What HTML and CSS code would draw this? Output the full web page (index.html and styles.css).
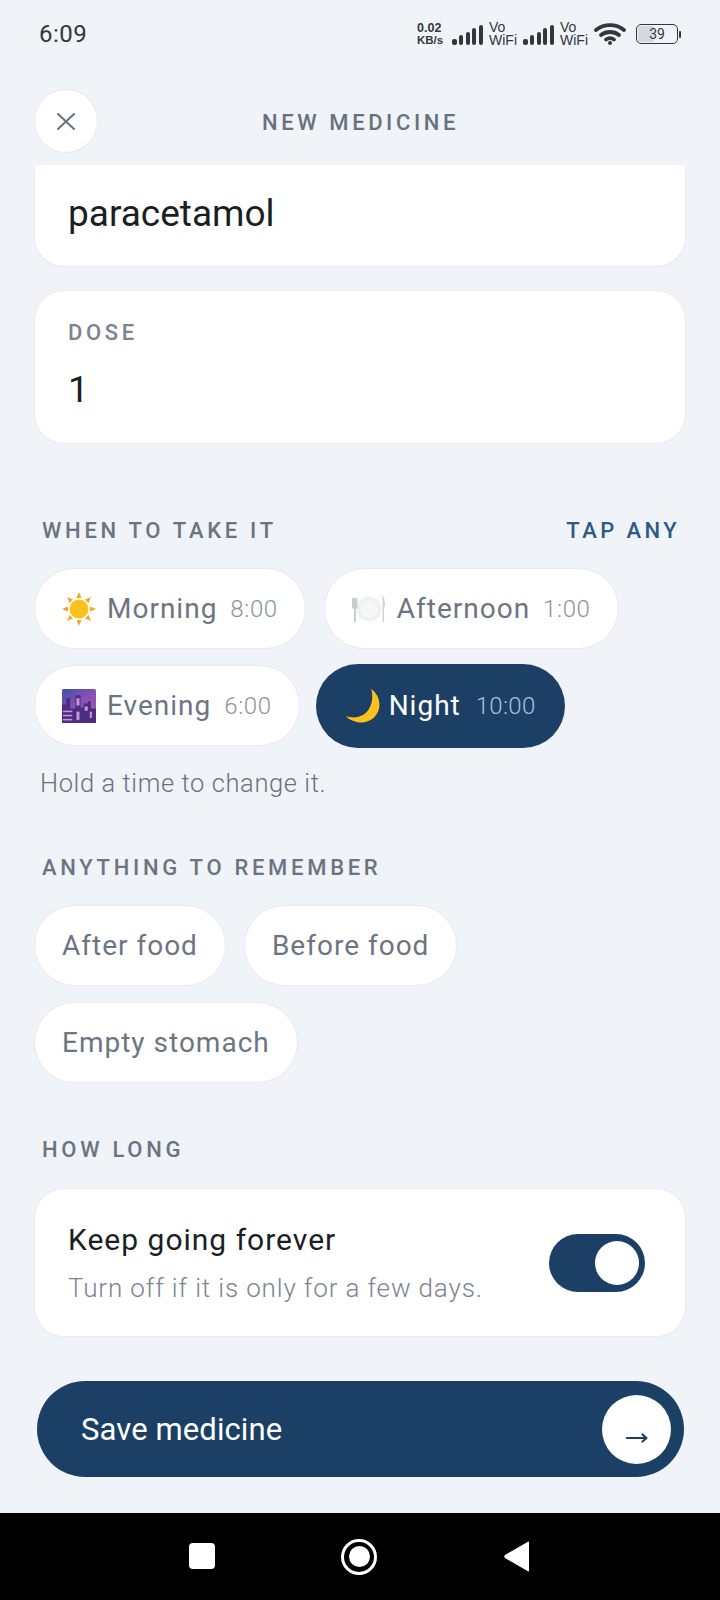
FILE: index.html
```html
<!DOCTYPE html>
<html lang="en">
<head>
<meta charset="utf-8">
<title>New medicine</title>
<link rel="stylesheet" href="styles.css">
</head>
<body>
<div class="phone">
  <div class="status">
    <span class="clock">6:09</span>
    <div class="tray">
      <span class="speed"><b>0.02</b><b>KB/s</b></span>
      <svg class="signal" viewBox="0 0 31 20"><rect x="0" y="14" width="5" height="6" rx="2"/><rect x="7" y="10" width="4" height="10" rx="2"/><rect x="14" y="7" width="4" height="13" rx="2"/><rect x="20" y="3" width="4" height="17" rx="2"/><rect x="27" y="0" width="4" height="20" rx="2"/></svg>
      <span class="vowifi">Vo<br>WiFi</span>
      <svg class="signal" viewBox="0 0 31 20"><rect x="0" y="14" width="5" height="6" rx="2"/><rect x="7" y="10" width="4" height="10" rx="2"/><rect x="14" y="7" width="4" height="13" rx="2"/><rect x="20" y="3" width="4" height="17" rx="2"/><rect x="27" y="0" width="4" height="20" rx="2"/></svg>
      <span class="vowifi">Vo<br>WiFi</span>
      <svg class="wifi" viewBox="0 0 32 22" fill="none" stroke="#33373d" stroke-width="3.800" stroke-linecap="round"><path d="M2 7C10 .5 22 .5 30 7"/><path d="M7 12C12 8 20 8 25 12"/><path d="M12 16.500C14.500 14.800 17.500 14.800 20 16.500"/><circle cx="16" cy="20" r="2" fill="#33373d" stroke="none"/></svg>
      <div class="battery"><div class="battery-body"><span class="battery-fill"></span><span class="battery-pct">39</span></div><span class="battery-nib"></span></div>
    </div>
  </div>

  <header class="topbar">
    <button class="close" aria-label="Close">
      <svg viewBox="0 0 20 17" fill="none" stroke="#68727f" stroke-width="2" stroke-linecap="round"><path d="M2 1l16 15M18 1L2 16"/></svg>
    </button>
    <h1 class="title">NEW MEDICINE</h1>
  </header>

  <main class="scroll">
    <div class="field field-clipped"><span class="field-value">paracetamol</span></div>
    <div class="field">
      <span class="field-label">DOSE</span>
      <span class="field-value">1</span>
    </div>

    <div class="section-head first">
      <span class="section-label">WHEN TO TAKE IT</span>
      <span class="section-action">TAP ANY</span>
    </div>
    <div class="chips">
      <div class="chip">
        <svg class="emoji" viewBox="0 0 34 34"><g fill="#f6a623"><path d="M17 0l2.500 6h-5z"/><path d="M17 34l-2.500-6h5z"/><path d="M0 17l6-2.500v5z"/><path d="M34 17l-6 2.500v-5z"/><path d="M5 5l6 2.500-3.500 3.500z"/><path d="M29 5l-2.500 6-3.500-3.500z"/><path d="M5 29l2.500-6 3.500 3.500z"/><path d="M29 29l-6-2.500 3.500-3.500z"/></g><circle cx="17" cy="17" r="9.500" fill="#fcc21b"/></svg>
        <span class="chip-name">Morning</span><span class="chip-time">8:00</span>
      </div>
      <div class="chip">
        <svg class="emoji" viewBox="0 0 34 34"><circle cx="17" cy="17" r="12.500" fill="#eff0f1"/><circle cx="17" cy="17" r="9" fill="#f7f7f8"/><path d="M0 6h5.500v9q0 2-1.500 2v13H2V17q-2 0-2-2z" fill="#c9cdd0"/><path d="M30.500 3q2.500 3 2.500 12h-1v15h-1.500z" fill="#cfd3d6"/></svg>
        <span class="chip-name">Afternoon</span><span class="chip-time">1:00</span>
      </div>
      <div class="chip">
        <svg class="emoji" viewBox="0 0 33 33"><defs><linearGradient id="dusk" x1="0" y1="0" x2=".7" y2="1"><stop offset="0" stop-color="#3a50ac"/><stop offset=".5" stop-color="#8a4fb4"/><stop offset="1" stop-color="#a85aa8"/></linearGradient></defs><rect width="33" height="33" rx="1.500" fill="url(#dusk)"/><path d="M0 15h4V9h4v10h5V6h5v12h3v-4h4v-2h3v7h5v14H0z" fill="#4d2d80"/><g fill="#c996d4"><rect x="1" y="21" width="9" height="1.500"/><rect x="1" y="25" width="9" height="1.500"/><rect x="1" y="29" width="9" height="1.500"/><rect x="14" y="9" width="3" height="7"/><rect x="22" y="17" width="3" height="4"/><rect x="27" y="22" width="2" height="6"/><rect x="14" y="22" width="3" height="8"/></g></svg>
        <span class="chip-name">Evening</span><span class="chip-time">6:00</span>
      </div>
      <div class="chip chip-on">
        <svg class="emoji" viewBox="0 0 33 33"><path d="M24.500 0C33 6 36 19 27 28c-8 7-20 5.500-27-1.500C8 29 17 27.500 22 20c3.500-6 4.500-13 2.500-20z" fill="#fcc21b"/></svg>
        <span class="chip-name">Night</span><span class="chip-time">10:00</span>
      </div>
    </div>
    <p class="hint">Hold a time to change it.</p>

    <div class="section-head remember">
      <span class="section-label">ANYTHING TO REMEMBER</span>
    </div>
    <div class="chips">
      <div class="chip chip-text"><span class="chip-name">After food</span></div>
      <div class="chip chip-text"><span class="chip-name">Before food</span></div>
      <div class="chip chip-text"><span class="chip-name">Empty stomach</span></div>
    </div>

    <div class="section-head">
      <span class="section-label">HOW LONG</span>
    </div>
    <div class="forever">
      <div class="forever-copy">
        <span class="forever-title">Keep going forever</span>
        <span class="forever-sub">Turn off if it is only for a few days.</span>
      </div>
      <div class="toggle"><span class="knob"></span></div>
    </div>

    <button class="save">
      <span>Save medicine</span>
      <span class="save-go">
        <svg class="save-arrow" viewBox="0 0 22 10" fill="none" stroke="#1c3f66" stroke-width="2.200" stroke-linecap="round" stroke-linejoin="round"><path d="M1 5h19M16.500 1.500L20.500 5l-4 3.500"/></svg>
      </span>
    </button>
  </main>

  <nav class="navbar">
    <span class="nav-square"></span>
    <span class="nav-circle"><span class="nav-dot"></span></span>
    <svg class="nav-back" viewBox="0 0 25 31"><path d="M25 1.500v28q0 1.500-1.500 .5L1 17q-1.500-1.500 0-3L23.500 1q1.500-1 1.500 .5z" fill="#fff"/></svg>
  </nav>
</div>
</body>
</html>
```
FILE: styles.css
```css
* { box-sizing: border-box; }

html, body { margin: 0; padding: 0; }

body {
  background: #f0f3f8;
  font-family: Roboto, "Liberation Sans", sans-serif;
}

.phone {
  width: 720px;
  height: 1600px;
  display: flex;
  flex-direction: column;
  overflow: hidden;
}

/* Status bar */
.status {
  height: 68px;
  flex: none;
  display: flex;
  align-items: center;
  justify-content: space-between;
  padding: 0 39px;
  color: #33373d;
}

.clock { font-size: 24px; letter-spacing: .5px; }

.tray { display: flex; align-items: center; }

.speed { display: flex; flex-direction: column; font-family: "Liberation Sans", sans-serif; width: 35px; font-size: 12.500px; line-height: 12px; }
.speed b { display: block; font-weight: 700; }
.speed b:last-child { font-size: 11.500px; }

.signal { width: 31px; height: 20px; fill: #33373d; margin-top: 2px; }

.vowifi {
  width: 28px;
  margin: 0 6px;
  font-family: "Liberation Sans", sans-serif;
  font-size: 14px;
  line-height: 13.500px;
  color: #33373d;
}

.wifi { width: 32px; height: 22px; }

.battery { display: flex; align-items: center; margin-left: 10px; }

.battery-body {
  position: relative;
  width: 42px;
  height: 20px;
  border: 1.500px solid #33373d;
  border-radius: 5px;
  display: flex;
  align-items: center;
  justify-content: center;
  overflow: hidden;
}

.battery-fill { position: absolute; inset: 1px auto 1px 1px; width: 40%; background: #d5d8dc; border-radius: 2px; }

.battery-pct { position: relative; font-size: 14px; color: #33373d; }

.battery-nib { width: 2px; height: 7px; margin-left: 1px; background: #33373d; border-radius: 1px; }

/* Top bar */
.topbar {
  height: 97px;
  flex: none;
  position: relative;
  padding: 21px 0 0 34px;
}

.close {
  width: 64px;
  height: 64px;
  padding: 0;
  display: flex;
  align-items: center;
  justify-content: center;
  background: #fff;
  border: 1.500px solid #e6eaf1;
  border-radius: 50%;
}

.close svg { width: 20px; height: 17px; }

.title {
  position: absolute;
  top: 42px;
  left: 1px;
  right: 0;
  margin: 0;
  text-align: center;
  font-size: 22px;
  line-height: 26px;
  font-weight: 500;
  letter-spacing: 3.600px;
  color: #68727f;
}

/* Scrolling form */
.scroll {
  flex: 1;
  min-height: 0;
  overflow: hidden;
  padding: 0 34px;
}

.field {
  height: 154px;
  margin-top: 23px;
  padding: 29px 33px 0;
  background: #fff;
  border: 1.500px solid #e6eaf1;
  border-radius: 30px;
  display: flex;
  flex-direction: column;
}

.field-clipped {
  height: 102px;
  margin-top: 0;
  padding-top: 15px;
  border-top: 0;
  border-radius: 0 0 30px 30px;
}

.field-label {
  font-size: 22px;
  line-height: 26px;
  font-weight: 500;
  letter-spacing: 3.600px;
  color: #7a838f;
}

.field-value {
  margin-top: 21px;
  font-size: 37px;
  line-height: 46px;
  color: #1b1f24;
}

.field-clipped .field-value { margin-top: 11px; }

.section-head {
  display: flex;
  justify-content: space-between;
  margin: 54px 6px 0 8px;
  height: 26px;
  font-size: 22px;
  line-height: 26px;
  font-weight: 500;
  letter-spacing: 3.700px;
}

.section-head.first { margin-top: 74px; }
.section-head.remember { margin-top: 57px; }

.section-label { color: #6b7481; }
.section-action { color: #2c5a88; letter-spacing: 3.400px; }

.chips {
  display: flex;
  flex-wrap: wrap;
  gap: 16px 18px;
  margin-top: 24px;
}

.chip {
  height: 81px;
  padding: 0 27px;
  display: flex;
  align-items: center;
  background: #fff;
  border: 1.500px solid #e6eaf1;
  border-radius: 41px;
}

.emoji { width: 34px; height: 34px; margin-right: 11px; flex: none; }

.chip-name {
  font-size: 28px;
  letter-spacing: 1px;
  color: #6d7581;
}

.chip-time {
  margin-left: 13px;
  font-size: 24px;
  font-weight: 300;
  letter-spacing: .6px;
  color: #8d949e;
}

.chip-on {
  height: 84px;
  margin: -1.500px 0 -1.500px -2px;
  padding: 0 29px 0 30px;
  background: #1c3f66;
  border: 0;
  border-radius: 42px;
}

.chip-on .emoji { margin-right: 9px; }
.chip-on .chip-name { color: #fff; }
.chip-on .chip-time { margin-left: 15px; color: #a9c0da; letter-spacing: .3px; }

.hint {
  margin: 22px 0 0 6px;
  font-size: 25.500px;
  line-height: 30px;
  font-weight: 300;
  letter-spacing: .6px;
  color: #69727e;
}

.forever {
  height: 149px;
  margin-top: 25px;
  padding: 0 40px 0 33px;
  display: flex;
  align-items: center;
  justify-content: space-between;
  background: #fff;
  border: 1.500px solid #e6eaf1;
  border-radius: 30px;
}

.forever-copy { display: flex; flex-direction: column; gap: 14px; }

.forever-title {
  font-size: 30px;
  line-height: 36px;
  letter-spacing: 1px;
  color: #1b1f24;
}

.forever-sub {
  font-size: 26px;
  line-height: 32px;
  font-weight: 300;
  letter-spacing: .85px;
  color: #7c848f;
}

.toggle {
  width: 96px;
  height: 58px;
  padding: 7px 6px;
  display: flex;
  justify-content: flex-end;
  background: #1c3f66;
  border-radius: 29px;
}

.knob { width: 44px; height: 44px; background: #fff; border-radius: 50%; }

.save {
  width: 647px;
  height: 96px;
  margin: 44px 0 0 3px;
  padding: 0 13px 0 44px;
  display: flex;
  align-items: center;
  justify-content: space-between;
  background: #1c3f66;
  border: 0;
  border-radius: 48px;
  font-family: inherit;
  font-size: 31px;
  font-weight: 450;
  letter-spacing: .1px;
  color: #fff;
}

.save-go {
  width: 69px;
  height: 69px;
  display: flex;
  align-items: center;
  justify-content: center;
  background: #fff;
  border-radius: 50%;
}

.save-arrow { width: 22px; height: 10px; margin-top: 17px; }

/* Android navigation */
.navbar {
  height: 87px;
  flex: none;
  background: #000;
  display: grid;
  grid-template-columns: 189px 26px 126px 36px 127px 25px;
  align-items: center;
}

.nav-square { grid-column: 2; width: 26px; height: 26px; background: #fff; border-radius: 4px; margin-top: -1px; }

.nav-circle {
  grid-column: 4;
  width: 36px;
  height: 36px;
  display: flex;
  align-items: center;
  justify-content: center;
  border: 3px solid #fff;
  border-radius: 50%;
}

.nav-dot { width: 21px; height: 21px; background: #fff; border-radius: 50%; }

.nav-back { grid-column: 6; width: 25px; height: 31px; }
```
